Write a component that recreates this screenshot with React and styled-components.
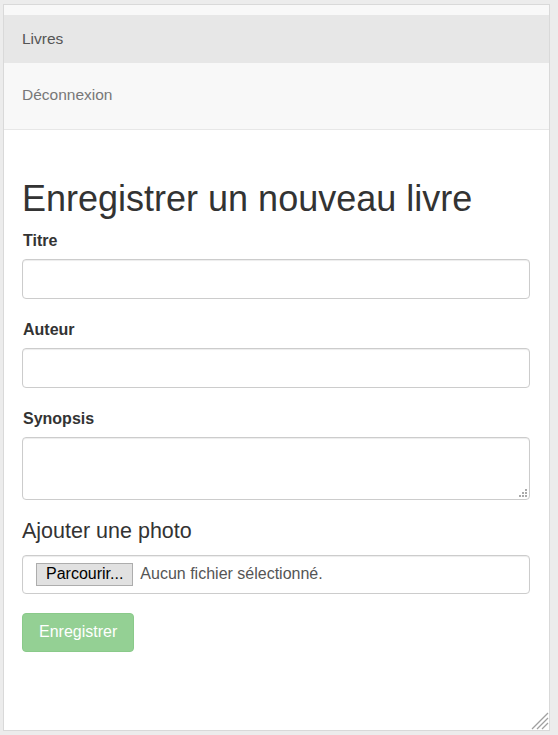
import styled, { createGlobalStyle } from "styled-components";

const GlobalStyle = createGlobalStyle`
  html, body {
    margin: 0;
    padding: 0;
    background: #ececec;
  }
  body {
    font-family: "Liberation Sans", Arial, sans-serif;
    font-size: 16px;
    line-height: 1.42857;
    color: #333;
  }
  * {
    box-sizing: border-box;
  }
`;

const Page = styled.div`
  padding: 4px 8px 4px 3px;
`;

const Frame = styled.div`
  position: relative;
  height: 727px;
  background: #fff;
  border: 1px solid #d9d9d9;
  display: flex;
  flex-direction: column;
`;

const Navbar = styled.nav`
  background: #f8f8f8;
  border-bottom: 1px solid #e7e7e7;
  padding: 10px 0;
  display: flex;
  flex-direction: column;
  gap: 8px;
`;

const NavItem = styled.a`
  display: flex;
  align-items: center;
  height: 48px;
  padding: 0 18px;
  font-size: 15.5px;
  text-decoration: none;
  color: ${({ $active }) => ($active ? "#555" : "#777")};
  background: ${({ $active }) => ($active ? "#e7e7e7" : "transparent")};
`;

const Content = styled.main`
  padding: 49px 19px 0 18px;
`;

const Title = styled.h1`
  margin: 0 0 11px;
  font-size: 36px;
  font-weight: 400;
  line-height: 1.1;
  color: #333;
`;

const FormGroup = styled.div`
  margin-bottom: 20px;
`;

const Label = styled.label`
  display: block;
  margin-bottom: 7px;
  padding-left: 1px;
  font-weight: 700;
  font-size: 16px;
  line-height: 22px;
  color: #333;
`;

const Input = styled.input`
  display: block;
  width: 100%;
  height: 40px;
  padding: 6px 12px;
  font: inherit;
  color: #555;
  background: #fff;
  border: 1px solid #ccc;
  border-radius: 4px;
  box-shadow: inset 0 1px 1px rgba(0, 0, 0, 0.075);
  outline: none;
`;

const AreaWrap = styled.div`
  position: relative;
`;

const TextArea = styled.textarea`
  display: block;
  width: 100%;
  height: 63px;
  padding: 6px 12px;
  font: inherit;
  color: #555;
  border: 1px solid #ccc;
  border-radius: 4px;
  box-shadow: inset 0 1px 1px rgba(0, 0, 0, 0.075);
  resize: none;
  outline: none;
`;

const Grip = styled.svg`
  position: absolute;
  right: 3px;
  bottom: 3px;
`;

const Legend = styled.div`
  font-size: 21.5px;
  line-height: 23px;
  color: #333;
  margin-bottom: 12px;
`;

const FileBox = styled.label`
  display: flex;
  align-items: center;
  gap: 7px;
  height: 39px;
  padding: 0 13px;
  border: 1px solid #ccc;
  border-radius: 4px;
  box-shadow: inset 0 1px 1px rgba(0, 0, 0, 0.075);
  color: #555;
  font-size: 16px;
  margin-bottom: 19px;
`;

const FileButton = styled.span`
  display: inline-flex;
  align-items: center;
  height: 23px;
  padding: 0 9px;
  background: #e1e1e1;
  border: 1px solid #adadad;
  color: #000;
  font-size: 16px;
`;

const Submit = styled.button`
  height: 39px;
  padding: 0 16px;
  font: inherit;
  font-size: 16px;
  color: #fff;
  background: #5cb85c;
  border: 1px solid #4cae4c;
  border-radius: 4px;
  opacity: 0.65;
  cursor: not-allowed;
`;

const Resizer = styled.svg`
  position: absolute;
  right: 0;
  bottom: 0;
`;

export default function App() {
  return (
    <Page>
      <GlobalStyle />
      <Frame>
        <Navbar>
          <NavItem $active href="#">Livres</NavItem>
          <NavItem href="#">Déconnexion</NavItem>
        </Navbar>
        <Content>
          <Title>Enregistrer un nouveau livre</Title>
          <FormGroup>
            <Label htmlFor="titre">Titre</Label>
            <Input id="titre" type="text" />
          </FormGroup>
          <FormGroup>
            <Label htmlFor="auteur">Auteur</Label>
            <Input id="auteur" type="text" />
          </FormGroup>
          <FormGroup>
            <Label htmlFor="synopsis">Synopsis</Label>
            <AreaWrap>
              <TextArea id="synopsis" />
              <Grip width="8" height="8" viewBox="0 0 8 8">
                <g fill="#aaa">
                  <rect x="6" y="0" width="2" height="2" />
                  <rect x="3" y="3" width="2" height="2" />
                  <rect x="6" y="3" width="2" height="2" />
                  <rect x="0" y="6" width="2" height="2" />
                  <rect x="3" y="6" width="2" height="2" />
                  <rect x="6" y="6" width="2" height="2" />
                </g>
              </Grip>
            </AreaWrap>
          </FormGroup>
          <Legend>Ajouter une photo</Legend>
          <FileBox>
            <FileButton>Parcourir...</FileButton>
            Aucun fichier sélectionné.
          </FileBox>
          <Submit disabled>Enregistrer</Submit>
        </Content>
        <Resizer width="20" height="20" viewBox="0 0 20 20">
          <g stroke="#a0a0a0" strokeWidth="1.2">
            <line x1="3" y1="19" x2="19" y2="3" />
            <line x1="8" y1="19" x2="19" y2="8" />
            <line x1="13" y1="19" x2="19" y2="13" />
          </g>
        </Resizer>
      </Frame>
    </Page>
  );
}
